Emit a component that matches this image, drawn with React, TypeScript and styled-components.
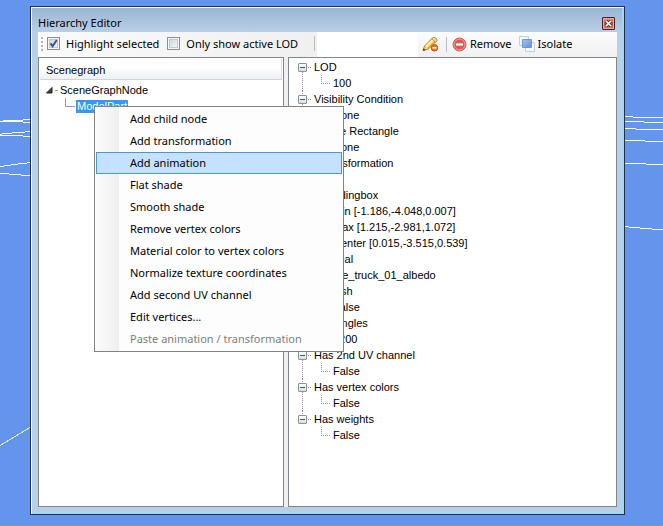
import React from "react";
import styled, { createGlobalStyle } from "styled-components";

const uiFont = `"Noto Sans", "Open Sans", sans-serif`;
const treeFont = `"Liberation Sans", Arial, sans-serif`;

const GlobalStyle = createGlobalStyle`
  * { box-sizing: border-box; }
  body { margin: 0; background: #6495ed; }
  ul { margin: 0; padding: 0; list-style: none; }
  button { margin: 0; padding: 0; border: 0; background: none; font: inherit; color: inherit; }
`;

const Viewport = styled.div`
  position: relative;
  display: flex;
  min-height: 100vh;
  padding: 6px 38px 10px 30px;
  border-bottom: 1px solid #8b97a8;
  font: 11px/16px ${uiFont};
  color: #000;
`;

const Wires = styled.svg<{ $side: "left" | "right" }>`
  position: absolute;
  top: 0;
  ${(p) => p.$side}: 0;
  fill: none;
  stroke: #fcfff0;
`;

const Window = styled.main`
  position: relative;
  flex: 1;
  display: flex;
  flex-direction: column;
  padding: 0 7px 7px;
  border: 1px solid #1d3046;
  background: linear-gradient(#9ab4d1, #b9d0e7 26px, #b9cfe6);
  box-shadow: inset 1px 1px #f4f9fd, inset -2px -2px #a3d7f3;
`;

const TitleBar = styled.header`
  display: flex;
  align-items: center;
  justify-content: space-between;
  height: 25px;
  padding: 7px 2px 0 0;
`;

const Title = styled.h1`
  margin: 0;
  font: 11px/16px ${uiFont};
`;

const CloseButton = styled.button`
  display: flex;
  width: 13px;
  height: 13px;
  border: 1px solid #4d2024;
  border-radius: 1px;
  background: linear-gradient(#dca096, #b5534d 50%, #c9827c);
  box-shadow: inset 0 0 0 1px #e0aaa2;
`;

const Content = styled.div`
  flex: 1;
  display: flex;
  flex-direction: column;
`;

const Toolbar = styled.div`
  display: flex;
  height: 25px;
  background: #fff;
`;

const CheckStrip = styled.div`
  display: flex;
  align-items: center;
  min-width: 279px;
  padding: 0 2px 2px 3px;
  background: linear-gradient(90deg, #fafafa, #f0f0f0);
`;

const EmptyStrip = styled.div`
  flex: 0 1 101px;
`;

const ToolStrip = styled.div`
  flex: 1;
  display: flex;
  align-items: center;
  padding: 0 4px 1px;
  background: linear-gradient(#fcfcfc, #f0f0f0);
`;

const Grip = styled.span`
  width: 2px;
  height: 14px;
  margin-right: 4px;
  background: repeating-linear-gradient(#b4b4b4 0 2px, transparent 2px 4px);
`;

const Divider = styled.span<{ $end?: boolean }>`
  width: 1px;
  height: 15px;
  margin-right: ${(p) => (p.$end ? 0 : 5)}px;
  margin-left: ${(p) => (p.$end ? "auto" : "0")};
  background: #bdbdbd;
`;

const CheckLabel = styled.label`
  display: flex;
  align-items: center;
  gap: 6px;
  margin-right: 8px;
  white-space: nowrap;
`;

const CheckFrame = styled.span`
  display: grid;
  width: 13px;
  height: 13px;
  > * { grid-area: 1 / 1; }
  svg { pointer-events: none; visibility: hidden; }
  input:checked + svg { visibility: visible; }
`;

const CheckBox = styled.input`
  appearance: none;
  width: 13px;
  height: 13px;
  margin: 0;
  border: 1px solid #8a8d91;
  background: linear-gradient(135deg, #c5cad0, #f5f6f7 80%);
  box-shadow: inset 0 0 0 1px #f5f5f5, inset 0 0 0 2px #c4c8cd;
`;

const ToolButton = styled.button`
  display: flex;
  align-items: center;
  gap: 3px;
  margin-right: 7px;
  white-space: nowrap;
`;

const Panels = styled.div`
  flex: 1;
  display: grid;
  grid-template-columns: 246fr 329fr;
  gap: 4px;
  background: #f0f0f0;
`;

const Panel = styled.section`
  min-width: 0;
  padding: 1px;
  border: 1px solid #7f868e;
  background: #fff;
  font: 11px/16px ${treeFont};
  white-space: nowrap;
`;

const ColumnHeader = styled.h2`
  margin: 0 0 2px;
  padding: 3px 6px 1px;
  border-bottom: 1px solid #d2d4d7;
  border-right: 1px solid #e2e3e5;
  background: linear-gradient(#fff 40%, #eff0f2);
  font: 11px/16px ${treeFont};
`;

const SceneNode = styled.button`
  display: flex;
  align-items: center;
  gap: 2px;
  padding-left: 6px;
`;

const Dash = styled.span`
  width: 3px;
  height: 1px;
  background: #9a9aa8;
`;

const SceneChild = styled.div`
  display: flex;
  align-items: flex-start;
  padding-left: 25px;
`;

const SceneElbow = styled.span`
  width: 10px;
  height: 9px;
  margin-right: 1px;
  border: solid #9a94c4;
  border-width: 0 0 1px 1px;
`;

const Selected = styled.div`
  position: relative;
  margin-top: 2px;
  padding: 0 1px;
  background: #3697f5;
  color: #fff;
  line-height: 13px;
`;

const Menu = styled.ul`
  position: absolute;
  z-index: 2;
  top: 6px;
  left: 18px;
  width: 250px;
  padding: 1px;
  border: 1px solid #808285;
  background: linear-gradient(90deg, #fcfcfc, #efefef 24px, #fdfdfd 24px);
  font: 11px/20px ${uiFont};
  color: #000;
`;

const MenuButton = styled.button<{ $active?: boolean }>`
  display: block;
  width: 100%;
  padding: 0 33px;
  border: 1px solid ${(p) => (p.$active ? "#4a98cf" : "transparent")};
  background: ${(p) => (p.$active ? "#c4e1ff" : "transparent")};
  text-align: left;
  &:disabled { color: #7d7d7d; }
`;

const PropertyTree = styled.ul`
  padding-left: 8px;
`;

const Group = styled.li`
  display: grid;
  grid-template-columns: 9px 1fr;
`;

const Rail = styled.div`
  display: flex;
  flex-direction: column;
  align-items: center;
`;

const RailLine = styled.span<{ $lead?: boolean; $hidden?: boolean }>`
  width: 1px;
  ${(p) => (p.$lead ? "height: 4px;" : "flex: 1;")}
  visibility: ${(p) => (p.$hidden ? "hidden" : "visible")};
  background: repeating-linear-gradient(#909090 0 1px, transparent 1px 2px);
`;

const Collapse = styled.button`
  display: flex;
  align-items: center;
  justify-content: center;
  width: 9px;
  height: 9px;
  border: 1px solid #919191;
  border-radius: 1px;
  background: linear-gradient(#fff, #dcdcdc);
`;

const Minus = styled.span`
  width: 5px;
  height: 1px;
  background: #3d5a8c;
`;

const GroupName = styled.div`
  display: flex;
  align-items: center;
  gap: 3px;
  padding-left: 1px;
`;

const Dots = styled.span`
  width: 3px;
  height: 1px;
  background: repeating-linear-gradient(90deg, #909090 0 1px, transparent 1px 2px);
`;

const Leaf = styled.li`
  display: flex;
  height: 16px;
  padding-left: 14px;
`;

const LeafElbow = styled.span`
  width: 9px;
  height: 9px;
  margin-right: 3px;
  background:
    repeating-linear-gradient(#909090 0 1px, transparent 1px 2px) left / 1px 100% no-repeat,
    repeating-linear-gradient(90deg, #909090 0 1px, transparent 1px 2px) bottom / 100% 1px no-repeat;
`;

const properties: { name: string; values: string[] }[] = [
  { name: "LOD", values: ["100"] },
  { name: "Visibility Condition", values: ["None"] },
  { name: "Visible Rectangle", values: ["None"] },
  { name: "1 transformation", values: [""] },
  { name: "Boundingbox", values: ["Min [-1.186,-4.048,0.007]", "Max [1.215,-2.981,1.072]", "Center [0.015,-3.515,0.539]"] },
  { name: "Material", values: ["fire_truck_01_albedo"] },
  { name: "Is Mesh", values: ["False"] },
  { name: "# Triangles", values: ["1200"] },
  { name: "Has 2nd UV channel", values: ["False"] },
  { name: "Has vertex colors", values: ["False"] },
  { name: "Has weights", values: ["False"] },
];

const menuItems: { label: string; active?: boolean; disabled?: boolean }[] = [
  { label: "Add child node" },
  { label: "Add transformation" },
  { label: "Add animation", active: true },
  { label: "Flat shade" },
  { label: "Smooth shade" },
  { label: "Remove vertex colors" },
  { label: "Material color to vertex colors" },
  { label: "Normalize texture coordinates" },
  { label: "Add second UV channel" },
  { label: "Edit vertices..." },
  { label: "Paste animation / transformation", disabled: true },
];

function Option({ label, checked }: { label: string; checked?: boolean }) {
  return (
    <CheckLabel>
      <CheckFrame>
        <CheckBox type="checkbox" defaultChecked={checked} />
        <svg width="13" height="13" viewBox="0 0 13 13">
          <path d="M3.5 6.2 5.6 9.2 9.8 3" fill="none" stroke="#3b4f9c" strokeWidth="2" />
        </svg>
      </CheckFrame>
      {label}
    </CheckLabel>
  );
}

function PencilIcon() {
  return (
    <svg width="17" height="16" viewBox="0 0 17 16">
      <path d="M1 14.5 2.5 10 10.7 1.8Q12 .8 13.4 2L14.4 3Q15.4 4.2 14.2 5.5L6 13.3Z" fill="#f7d35c" stroke="#b8822e" />
      <path d="M4 10.6 11.4 3.3" stroke="#fff3b4" strokeWidth="1.6" />
      <path d="M5.8 12.2 13 5.1" stroke="#dfa638" />
      <path d="M10.7 1.8Q12 .8 13.4 2L14.4 3Q15.4 4.2 14.2 5.5L13.4 6.3 10 2.6Z" fill="#f6dda4" stroke="#bf8b38" />
      <path d="M.8 14.9 1.6 12.2 3.6 14.1Z" fill="#51391f" />
      <circle cx="12.5" cy="11.8" r="3.3" fill="#e27a29" stroke="#b8561a" />
      <path d="M10.5 11.8h4" stroke="#fff" strokeWidth="1.4" />
    </svg>
  );
}

function RemoveIcon() {
  return (
    <svg width="15" height="15" viewBox="0 0 15 15">
      <circle cx="7.5" cy="7.5" r="6.5" fill="#df5650" stroke="#d5605b" />
      <circle cx="7.5" cy="7.5" r="5.4" fill="none" stroke="#f0a099" />
      <path d="M4 7.5h7" stroke="#fff" strokeWidth="2.2" />
    </svg>
  );
}

function IsolateIcon() {
  return (
    <svg width="16" height="16" viewBox="0 0 16 16">
      <defs>
        <linearGradient id="isolateFill" x1="0" y1="0" x2="1" y2="1">
          <stop offset="0" stopColor="#a3c3f1" />
          <stop offset="1" stopColor="#6591d8" />
        </linearGradient>
      </defs>
      <path d="M.5.5h9v9h-9zM6.5 6.5h9v9h-9z" fill="#f7f9fd" stroke="#c3cfe2" />
      <path d="M3.5 3.5h9v8h-9z" fill="url(#isolateFill)" stroke="#6f98d8" />
    </svg>
  );
}

export default function App() {
  return (
    <>
      <GlobalStyle />
      <Viewport>
        <Wires $side="left" width="30" height="460" aria-hidden="true" shapeRendering="crispEdges">
          <path d="M0 121.5H23M3 120.5H23M23 119.5H30M23 122.5H30" />
          <path d="M0 134.5H2M2 133.5H12M12 132.5H25M25 131.5H30M0 135.5H23M23 136.5H30" />
          <path d="M0 166.5H4M4 165.5H11M11 164.5H18M18 163.5H27M27 162.5H30" />
          <path d="M0 173.5H9M9 174.5H21M21 175.5H30" />
          <path d="M0 445.5 30 427.5" stroke="#d9f0a8" />
        </Wires>
        <Wires $side="right" width="38" height="240" aria-hidden="true" shapeRendering="crispEdges">
          <path d="M0 116.5H8M8 117.5H38M0 121.5H19M19 122.5H38M0 128.5H11M11 129.5H38" />
          <path d="M0 140.5H20M20 141.5H38M0 163.5H21M21 164.5H38" />
          <path d="M0 226.5H4M4 227.5H15M15 228.5H27M27 229.5H38" />
        </Wires>
        <Window>
          <TitleBar>
            <Title>Hierarchy Editor</Title>
            <CloseButton aria-label="Close">
              <svg width="11" height="11" viewBox="0 0 11 11">
                <path d="M3 3 8 8M8 3 3 8" stroke="#5d3438" strokeWidth="3.2" />
                <path d="M3 3 8 8M8 3 3 8" stroke="#fff" strokeWidth="1.7" />
              </svg>
            </CloseButton>
          </TitleBar>
          <Content>
            <Toolbar>
              <CheckStrip>
                <Grip />
                <Option label="Highlight selected" checked />
                <Option label="Only show active LOD" />
                <Divider $end />
              </CheckStrip>
              <EmptyStrip />
              <ToolStrip>
                <ToolButton aria-label="Edit">
                  <PencilIcon />
                </ToolButton>
                <Divider />
                <ToolButton>
                  <RemoveIcon />
                  Remove
                </ToolButton>
                <ToolButton>
                  <IsolateIcon />
                  Isolate
                </ToolButton>
              </ToolStrip>
            </Toolbar>
            <Panels>
              <Panel>
                <ColumnHeader>Scenegraph</ColumnHeader>
                <SceneNode>
                  <svg width="7" height="7" viewBox="0 0 7 7">
                    <path d="M6 .5V6H.5Z" fill="#404040" stroke="#222" />
                  </svg>
                  <Dash />
                  SceneGraphNode
                </SceneNode>
                <SceneChild>
                  <SceneElbow />
                  <Selected>
                    ModelPart
                    <Menu>
                      {menuItems.map((item) => (
                        <li key={item.label}>
                          <MenuButton $active={item.active} disabled={item.disabled}>
                            {item.label}
                          </MenuButton>
                        </li>
                      ))}
                    </Menu>
                  </Selected>
                </SceneChild>
              </Panel>
              <Panel>
                <PropertyTree>
                  {properties.map((group, index) => (
                    <Group key={group.name}>
                      <Rail>
                        <RailLine $lead $hidden={index === 0} />
                        <Collapse aria-label={`Collapse ${group.name}`}>
                          <Minus />
                        </Collapse>
                        <RailLine $hidden={index === properties.length - 1} />
                      </Rail>
                      <div>
                        <GroupName>
                          <Dots />
                          {group.name}
                        </GroupName>
                        <ul>
                          {group.values.map((value) => (
                            <Leaf key={value}>
                              <LeafElbow />
                              {value}
                            </Leaf>
                          ))}
                        </ul>
                      </div>
                    </Group>
                  ))}
                </PropertyTree>
              </Panel>
            </Panels>
          </Content>
        </Window>
      </Viewport>
    </>
  );
}
